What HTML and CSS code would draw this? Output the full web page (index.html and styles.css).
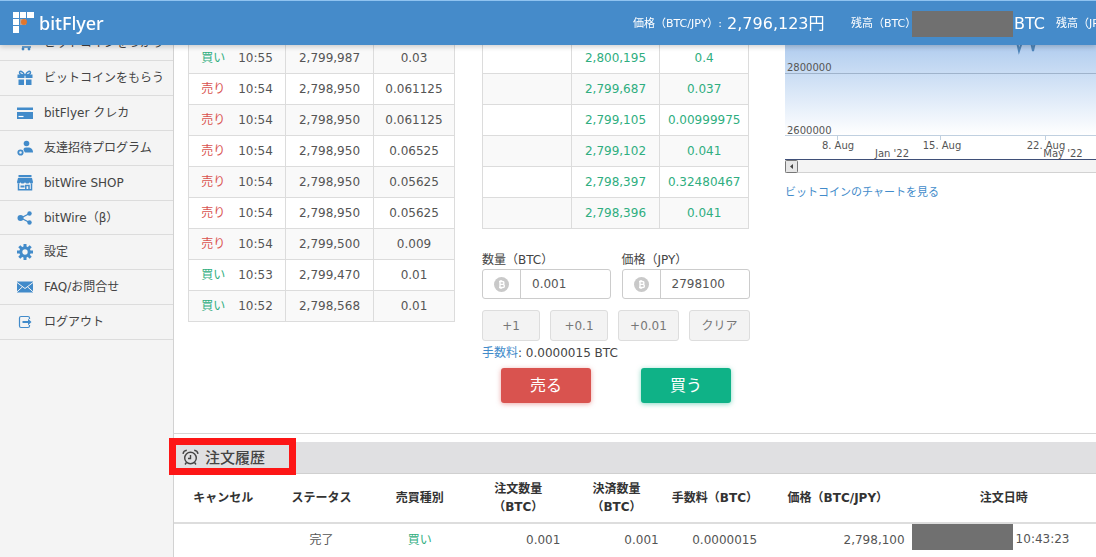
FILE: index.html
```html
<!DOCTYPE html>
<html lang="ja">
<head>
<meta charset="utf-8">
<title>bitFlyer</title>
<link rel="stylesheet" href="styles.css">
</head>
<body>
<header class="topbar">
  <a class="logo" href="#">
    <svg width="24" height="24" viewBox="0 0 24 24" aria-hidden="true">
      <g fill="#fff"><rect x="1" y="1" width="6" height="6"/><rect x="8" y="1" width="6" height="6"/><rect x="15" y="1" width="7" height="6"/><rect x="1" y="8" width="6" height="6"/><rect x="1" y="15" width="6" height="7"/></g>
      <rect x="8" y="8" width="6" height="6" fill="#b9a7a0"/><circle cx="12" cy="11" r="3" fill="#e2762c"/>
    </svg>
    <span>bitFlyer</span>
  </a>
  <div class="status">
    <div class="status-item price"><span>価格（BTC/JPY）:</span><strong>2,796,123円</strong></div>
    <div class="status-item"><span class="bal">残高（BTC）</span><i class="mask"></i><strong>BTC</strong></div>
    <div class="status-item"><span>残高（JPY）</span></div>
  </div>
</header>
<div class="page">
  <nav class="sidebar">
    <a href="#"><svg viewBox="0 0 16 16"><path d="M0 2h3l1 7h10M5 12h9" fill="none" stroke="#428bca" stroke-width="1.6"/><circle cx="6" cy="14" r="1.4"/><circle cx="12" cy="14" r="1.4"/></svg>ビットコインをつかう</a>
    <a href="#"><svg viewBox="0 0 16 16"><path d="M.5 4.500h7v3.500h-7zM8.500 4.500h7V8h-7zM1.500 9.500h5.500v5.500H1.500zM9 9.500h5.500V15H9z"/><path d="M7.500 5C6 1 2.500.5 2.500 2.500S5 5 8 5s5.500-.5 5.500-2.500S10 1 8.500 5" fill="none" stroke="#428bca" stroke-width="1.500"/></svg>ビットコインをもらう</a>
    <a href="#"><svg viewBox="0 0 16 16"><path d="M0 2.500h16V5H0zM0 7h16v7H0z"/><path d="M1.500 11.500h5" stroke="#fff" stroke-width="1.200"/></svg>bitFlyer クレカ</a>
    <a href="#"><svg viewBox="0 0 16 16"><circle cx="9.500" cy="3.500" r="2.800"/><path d="M7 11c-1-1.500-.5-3.500 2-3.500h2c3 0 5 1.500 5 5H8z"/><circle cx="3.500" cy="12.500" r="2.200" fill="none" stroke="#428bca" stroke-width="1.800"/></svg>友達招待プログラム</a>
    <a href="#"><svg viewBox="0 0 16 16"><path d="M1.500 0h13v2.200h-13zM1 3h14l1 4c0 2-3 2-3.300 0-.3 2-4.200 2-4.700 0-.5 2-4.400 2-4.700 0C3 9 0 9 0 7z"/><path d="M1.500 8.500v6.300h13V8.500M8.800 15v-4.500h3.200V15" fill="none" stroke="#428bca" stroke-width="1.500"/><path d="M3.500 10.500h4v2h-4z"/></svg>bitWire SHOP</a>
    <a href="#"><svg viewBox="0 0 16 16"><circle cx="3.500" cy="8" r="3"/><circle cx="12.500" cy="3.500" r="2.200"/><circle cx="12.500" cy="12.500" r="2.200"/><path d="M12.500 3.500 4 8l8.500 4.500" fill="none" stroke="#428bca" stroke-width="1.300"/></svg>bitWire（β）</a>
    <a href="#"><svg viewBox="0 0 16 16"><circle cx="8" cy="8" r="4.200" fill="none" stroke="#428bca" stroke-width="3"/><path d="M8 0v3.500M8 12.500V16M0 8h3.500M12.500 8H16M2.300 2.300l2.500 2.500M11.200 11.200l2.500 2.500M2.300 13.700l2.500-2.500M11.200 4.800l2.500-2.500" stroke="#428bca" stroke-width="3"/></svg>設定</a>
    <a href="#"><svg viewBox="0 0 16 16"><path d="M0 2.500h16v11H0z"/><path d="m0 3.500 8 6 8-6M0 12.800l5.500-5M16 12.800l-5.500-5" fill="none" stroke="#f4f4f4" stroke-width="1"/></svg>FAQ/お問合せ</a>
    <a href="#"><svg viewBox="0 0 16 16"><path d="M12.500 5V4c0-1-.5-1.500-1.500-1.500H4c-1 0-1.500.5-1.500 1.500v8c0 1 .5 1.500 1.500 1.500h7c1 0 1.500-.5 1.500-1.500v-1" fill="none" stroke="#428bca" stroke-width="1.200"/><path d="M5.500 7H11V4.800L14.500 8 11 11.200V9H5.500z"/></svg>ログアウト</a>
  </nav>
  <main class="main">
    <section class="board">
      <table class="grid trades">
        <colgroup><col class="c-time"><col class="c-price"><col></colgroup>
        <tbody>
        <tr><td><span class="buy">買い</span>10:55</td><td>2,799,987</td><td>0.03</td></tr>
        <tr><td><span class="sell">売り</span>10:54</td><td>2,798,950</td><td>0.061125</td></tr>
        <tr><td><span class="sell">売り</span>10:54</td><td>2,798,950</td><td>0.061125</td></tr>
        <tr><td><span class="sell">売り</span>10:54</td><td>2,798,950</td><td>0.06525</td></tr>
        <tr><td><span class="sell">売り</span>10:54</td><td>2,798,950</td><td>0.05625</td></tr>
        <tr><td><span class="sell">売り</span>10:54</td><td>2,798,950</td><td>0.05625</td></tr>
        <tr><td><span class="sell">売り</span>10:54</td><td>2,799,500</td><td>0.009</td></tr>
        <tr><td><span class="buy">買い</span>10:53</td><td>2,799,470</td><td>0.01</td></tr>
        <tr><td><span class="buy">買い</span>10:52</td><td>2,798,568</td><td>0.01</td></tr>
        </tbody>
      </table>
      <div class="order">
        <table class="grid asks">
          <tbody>
          <tr><td></td><td>2,800,195</td><td>0.4</td></tr>
          <tr><td></td><td>2,799,687</td><td>0.037</td></tr>
          <tr><td></td><td>2,799,105</td><td>0.00999975</td></tr>
          <tr><td></td><td>2,799,102</td><td>0.041</td></tr>
          <tr><td></td><td>2,798,397</td><td>0.32480467</td></tr>
          <tr><td></td><td>2,798,396</td><td>0.041</td></tr>
          </tbody>
        </table>
        <form class="form">
          <div class="fields">
            <div class="field">
              <label for="qty">数量（BTC）</label>
              <div class="input"><span class="addon"><svg width="15" height="15" viewBox="0 0 15 15"><circle cx="7.500" cy="7.500" r="7.500" fill="#c9c9c9"/><path d="M5 4.500h3.500a1.400 1.400 0 0 1 0 2.900H6h2.800a1.500 1.500 0 0 1 0 3.100H5M6 4.500v6M7 3v1.500M7 10.500V12" fill="none" stroke="#fff" stroke-width="1.400"/></svg></span><input id="qty" type="text" value="0.001"></div>
            </div>
            <div class="field">
              <label for="price">価格（JPY）</label>
              <div class="input"><span class="addon"><svg width="15" height="15" viewBox="0 0 15 15"><circle cx="7.500" cy="7.500" r="7.500" fill="#c9c9c9"/><path d="M5 4.500h3.500a1.400 1.400 0 0 1 0 2.900H6h2.800a1.500 1.500 0 0 1 0 3.100H5M6 4.500v6M7 3v1.500M7 10.500V12" fill="none" stroke="#fff" stroke-width="1.400"/></svg></span><input id="price" type="text" value="2798100"></div>
            </div>
          </div>
          <div class="steps"><button type="button">+1</button><button type="button">+0.1</button><button type="button" class="wide">+0.01</button><button type="button" class="wide">クリア</button></div>
          <p class="fee"><a href="#">手数料</a>: 0.0000015 BTC</p>
          <div class="actions"><button type="button" class="do-sell">売る</button><button type="button" class="do-buy">買う</button></div>
        </form>
      </div>
      <div class="chart">
        <svg class="plot" role="img" aria-label="BTC/JPY">
          <defs><linearGradient id="area" x1="0" y1="0" x2="0" y2="1"><stop offset="0" stop-color="#aecbee"/><stop offset="1" stop-color="#fff"/></linearGradient></defs>
          <rect x="0" y="0" width="100%" height="93" fill="url(#area)"/>
          <path d="M232 0l2 9 3-9M246 0l2 9 2-9" fill="none" stroke="#4f86ba" stroke-width="2"/>
          <path d="M0 31.500h2000" stroke="#9fb3cb"/>
          <path d="M0 93.500h2000M52.500 93v5M155.500 93v5M260.500 93v5" stroke="#c0d0e0"/>
          <g><text x="2" y="29">2800000</text><text x="2" y="92">2600000</text></g>
          <g class="xlab"><text x="53" y="107">8. Aug</text><text x="157" y="107">15. Aug</text><text x="261" y="107">22. Aug</text><text x="107" y="115">Jan '22</text><text x="278" y="115">May '22</text></g>
          <rect x="0" y="118" width="100%" height="13" fill="#f4f4f4"/>
          <path d="M0 130.500h2000" stroke="#d2d2d2"/>
          <path d="M0 117.500h2000" stroke="#3f4f78"/>
          <rect x=".5" y="118.500" width="12" height="12" rx="1" fill="#e6e6e6" stroke="#777"/>
          <path d="M8 122v5l-3-2.500z" fill="#444"/>
        </svg>
        <a href="#">ビットコインのチャートを見る</a>
      </div>
    </section>
    <section class="history">
      <h2><svg width="17" height="17" viewBox="0 0 17 17" fill="none" stroke="#444" stroke-width="1.400"><circle cx="8.500" cy="9" r="5.800"/><path d="M8.500 6v3.500H6M1 4.800C1.300 3 2.800 1.500 4.800 1.300M16 4.800C15.700 3 14.200 1.500 12.200 1.300M4.500 13.500 3 15.500M12.500 13.500l1.500 2"/></svg>注文履歴<span class="highlight"></span></h2>
      <table class="orders">
        <thead><tr><th>キャンセル</th><th>ステータス</th><th>売買種別</th><th>注文数量<br>（BTC）</th><th>決済数量<br>（BTC）</th><th>手数料（BTC）</th><th class="w-price">価格（BTC/JPY）</th><th class="w-date">注文日時</th></tr></thead>
        <tbody><tr><td></td><td>完了</td><td class="buy">買い</td><td class="num">0.001</td><td class="num">0.001</td><td class="num">0.0000015</td><td class="num">2,798,100</td><td><div class="date"><i class="mask"></i>10:43:23</div></td></tr></tbody>
      </table>
    </section>
  </main>
</div>
</body>
</html>
```
FILE: styles.css
```css
* { box-sizing: border-box; }
body {
  margin: 0;
  background: #fff;
  color: #555;
  font: 12px/18px "DejaVu Sans", "Noto Sans CJK JP", sans-serif;
}
a { color: #428bca; text-decoration: none; }
button, input { font: inherit; color: inherit; }

.topbar {
  position: fixed;
  z-index: 5;
  top: 0;
  left: 0;
  right: 0;
  height: 45px;
  display: flex;
  align-items: center;
  overflow: hidden;
  background: #458bca;
  border-top: 1px solid #8fc3f0;
  box-shadow: 0 2px 5px rgba(0, 0, 0, .18);
  color: #fff;
}
.logo {
  display: flex;
  align-items: center;
  gap: 3px;
  padding-left: 12px;
  color: #fff;
  font: 500 18px/24px "Noto Sans", sans-serif;
}
.status {
  flex: 0 0 463px;
  margin-left: auto;
  padding-top: 2px;
  display: flex;
  overflow: hidden;
  white-space: nowrap;
  font-size: 11px;
}
.status-item { display: flex; flex: none; align-items: center; height: 26px; margin-right: 11px; }
.status-item strong { font-weight: 400; font-size: 16px; }
.price { width: 207px; gap: 5px; }
.bal { width: 61px; }
.mask { width: 101px; height: 26px; flex: none; margin-right: 1px; background: #707070; }

.page { display: flex; min-height: 100vh; }
.sidebar {
  flex: 0 0 173px;
  padding-top: 26px;
  background: #f4f4f4;
  display: grid;
  grid-template-rows: repeat(5, 35px) 34px repeat(3, 35px);
  align-content: start;
}
.sidebar a {
  display: flex;
  align-items: center;
  gap: 11px;
  padding-left: 17px;
  border-bottom: 1px solid #dcdcdc;
  color: #444;
  white-space: nowrap;
}
.sidebar svg { width: 16px; height: 16px; fill: #428bca; }
.main { flex: 1; min-width: 0; border-left: 1px solid #d2d2d2; }

.board {
  display: flex;
  padding: 42px 0 30px 14px;
  border-bottom: 1px solid #d6d6d6;
}
.grid {
  width: 267px;
  border-collapse: collapse;
  table-layout: fixed;
  text-align: center;
}
.grid td { height: 31px; padding: 0; border: 1px solid #dcdcdc; }
.trades { flex: none; align-self: flex-start; margin-right: 27px; }
.trades tr:nth-child(odd), .asks tr:nth-child(even) { background: #f9f9f9; }
.trades td span { margin-right: 13px; }
.c-time { width: 97px; }
.c-price { width: 88px; }
.asks { color: #2fae80; }
.buy { color: #2fae80; }
.sell { color: #d9534f; }
.order { flex: 0 0 268px; margin-right: 35px; }

.form { padding-top: 22px; color: #444; }
.fields { display: flex; gap: 11px; }
.field { flex: 1; min-width: 0; }
.field label { display: block; }
.input { display: flex; height: 30px; border: 1px solid #ccc; border-radius: 3px; }
.addon { flex: 0 0 38px; display: flex; align-items: center; justify-content: center; border-right: 1px solid #ccc; }
.input input { width: 100%; min-width: 0; padding: 0 11px; border: 0; background: none; color: #555; }
.steps { display: flex; justify-content: space-between; margin-top: 11px; }
.steps button {
  width: 58px;
  height: 31px;
  padding: 0;
  border: 1px solid #ddd;
  border-radius: 3px;
  background: #f3f3f3;
  color: #777;
}
.steps .wide { width: 61px; }
.fee { margin: 3px 0 6px; }
.actions { display: flex; justify-content: space-between; padding: 0 19px; }
.actions button { width: 90px; height: 35px; padding: 0; border: 0; border-radius: 3px; color: #fff; font-size: 16px; }
.do-sell { background: #d9534f; box-shadow: 0 1px 5px rgba(217, 83, 79, .5); }
.do-buy { background: #0fb287; box-shadow: 0 1px 5px rgba(15, 178, 135, .5); }

.chart { flex: 1; min-width: 0; font-size: 11px; }
.plot { display: block; width: 100%; height: 142px; font-size: 10px; fill: #555; }
.xlab { text-anchor: middle; }

.history { padding-top: 8px; }
.history h2 {
  position: relative;
  display: flex;
  align-items: center;
  gap: 6px;
  height: 32px;
  margin: 0;
  padding-left: 8px;
  background: #e0e0e2;
  border-bottom: 1px solid #d0d0d0;
  color: #444;
  font-size: 15px;
  font-weight: 500;
}
.highlight { position: absolute; left: -5px; top: -4px; width: 127px; height: 37px; border: 7px solid #fd1616; }
.orders { width: 100%; border-collapse: collapse; table-layout: fixed; text-align: center; }
.orders th { height: 49px; padding: 0; border-bottom: 2px solid #ddd; color: #333; font-weight: 700; }
.orders td { height: 31px; padding: 0; }
.orders .num { text-align: right; padding-right: 7px; }
.w-price { width: 16%; }
.w-date { width: 20%; }
.date { display: flex; align-items: center; gap: 2px; height: 31px; padding-bottom: 1px; }
.date .mask { align-self: flex-start; }
```
